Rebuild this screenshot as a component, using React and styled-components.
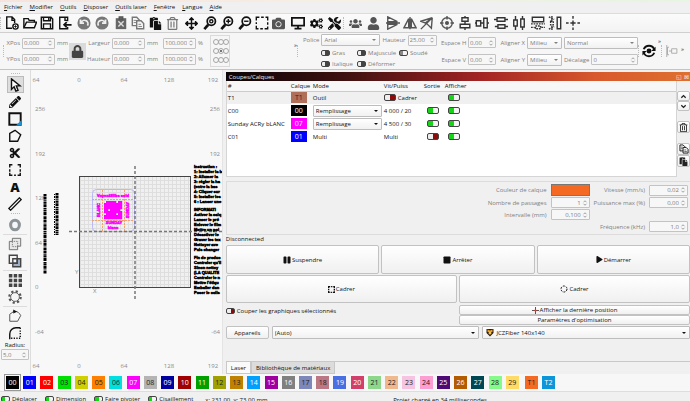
import React from "react";
import styled, { createGlobalStyle, css } from "styled-components";
import {
  FaLock,
  FaCamera,
  FaUser,
  FaUsers,
  FaCut,
  FaPencilAlt,
  FaPause,
  FaStop,
  FaPlay,
  FaCogs,
  FaTools,
  FaArrowsAlt,
  FaRegTrashAlt,
  FaPaste
} from "react-icons/fa";

const GlobalStyle = createGlobalStyle`
  * {
    box-sizing: border-box;
  }
  body {
    margin: 0;
    overflow: hidden;
    background: #f0f0f0;
    color: #111;
    font: 6px/8px "Open Sans", "Noto Sans", sans-serif;
  }
  button, input, select {
    margin: 0;
    font: inherit;
    color: inherit;
  }
  button {
    cursor: pointer;
  }
`;

/* ---------- icons, all on a 16 x 16 grid ---------- */

const Svg = styled.svg`
  display: block;
  flex: none;
  width: ${p => p.$size || 14}px;
  height: ${p => p.$size || 14}px;
  fill: none;
  stroke: currentColor;
  stroke-width: ${p => p.$weight || 1.6};
`;

const icons = {
  newFile: (
    <>
      <path d="M8 14H2V1h6l3 3v4M8 1v4h3" />
      <circle cx="12" cy="12" r="3" />
      <path d="M12 10.500v3M10.500 12h3" strokeWidth="1" />
    </>
  ),
  open: (
    <>
      <path d="M1 13V3h5l1 2h6v2" />
      <path d="M1 13.500L4 7h11.500L13 13.500z" />
    </>
  ),
  save: (
    <>
      <path d="M1.500 1.500h11l2 2v11h-13zM4 1.500v4h8v-4M4 14v-5h8v5" />
      <path d="M10 2v3" />
    </>
  ),
  importFile: (
    <>
      <path d="M11 6V1.500H2v13h9v-2M8 1.500V5h3" />
      <path d="M15.500 10H7M10 7l-3 3 3 3" strokeWidth="2" />
    </>
  ),
  undo: (
    <>
      <circle cx="8" cy="8" r="7.500" fill="#777" stroke="none" />
      <path d="M12 11a4 4 0 0 0-7-4M4 4v4h4" stroke="#eee" strokeWidth="2" />
    </>
  ),
  redo: (
    <>
      <circle cx="8" cy="8" r="7.500" fill="#777" stroke="none" />
      <path d="M4 11a4 4 0 0 1 7-4M12 4v4H8" stroke="#eee" strokeWidth="2" />
    </>
  ),
  cutPaste: (
    <>
      <path d="M2 2.500h12V15H2z" fill="#666" stroke="none" />
      <path d="M6 1h4v3H6z" fill="#666" />
      <path d="M5 6l6 6M11 6l-6 6" stroke="#ddd" />
    </>
  ),
  copy: (
    <>
      <path d="M1.500 1.500h5l3 3V11h-8z" />
      <path d="M6.500 5.500h5l3 3v6h-8z" fill="#f4f4f4" />
      <path d="M3 5h3M3 7.500h3M8.500 9.500h3M8.500 12h4" strokeWidth="1" />
    </>
  ),
  zoom: (
    <>
      <circle cx="9.500" cy="6" r="4.700" strokeWidth="2" />
      <path d="M6 10l-4.500 5" strokeWidth="3" />
      <circle cx="9.500" cy="6" r="1.800" />
    </>
  ),
  zoomIn: (
    <>
      <circle cx="9.500" cy="6" r="4.700" strokeWidth="2" />
      <path d="M6 10l-4.500 5" strokeWidth="3" />
      <path d="M7 6h5M9.500 3.500v5" />
    </>
  ),
  zoomOut: (
    <>
      <circle cx="9.500" cy="6" r="4.700" strokeWidth="2" />
      <path d="M6 10l-4.500 5" strokeWidth="3" />
      <path d="M7 6h5" />
    </>
  ),
  frame: (
    <path d="M1.500 5V1.500H5M7 1.500h3M12 1.500h2.500V5M14.500 7v3M14.500 12v2.500H11M9 14.500H6M4 14.500H1.500V11M1.500 9V7" />
  ),
  monitor: (
    <>
      <path d="M1 2h14v9H1z" strokeWidth="2" />
      <path d="M8 11v3M4 14.500h8" strokeWidth="2" />
    </>
  ),
  flip: <path d="M2 6.500L13 6.500 2 1zM2 9.500h11L2 15zM0 8h16" />,
  mirror: <path d="M6.500 3v10.500H1zM9.500 3v10.500H15zM8 1v14" />,
  mirrorAxis: <path d="M1 6l13-4L6 8zM14 2l-1 12-5-5M1 15L14 2" />,
  target: (
    <>
      <circle cx="8" cy="8" r="6" />
      <circle cx="8" cy="8" r="1.500" fill="currentColor" />
      <path d="M8 0v4M8 12v4M0 8h4M12 8h4" />
    </>
  ),
  alignV: <path d="M4.500 2h7v4h-7zM2.500 9.500h11v4h-11zM8 0v2M8 6v3.500M8 13.500V16" />,
  alignH: <path d="M1.500 5.500h5v6h-5zM10 2.500h4v11h-4zM6.500 8H10M14 8h2M0 8h1" />,
  spreadV: <path d="M3.500 2h9v4h-9zM4.500 10h8v4h-8zM0 4h3M13 4h3M1 12h3M13 12h3" />,
  spreadH: <path d="M2 4.500h4v7H2zM10 3.500h4v9h-4zM4 0v4M4 12v4M12 0v3M12 13v3" />,
  sameWidth: (
    <>
      <path d="M1.500 1.500h13v5h-13z" />
      <path d="M5 11.500h6v3H5zM0 9h16M0 13h4M12 13h4" strokeDasharray="2 1" />
    </>
  ),
  sameHeight: (
    <>
      <path d="M10.500 1.500h4v13h-4z" />
      <path d="M3 6h3v4H3zM4.500 0v5M4.500 11v5M1 1l6 3M1 15l6-3" strokeDasharray="2 1" />
    </>
  ),
  crossCenter: <path d="M8 0v3M8 5v6M8 13v3M0 8h3M5 8h6M13 8h3" />,
  cursor: <path d="M4 1v12l3-3 2 5 2.500-1-2-5H14z" fill="#fff" />,
  rectTool: (
    <>
      <path d="M1.500 1.500h13v13h-13z" strokeWidth="2.200" />
      <path d="M15.500 9v6.500H9z" fill="#1c94d8" stroke="none" />
    </>
  ),
  polygon: <path d="M2 14V5l6-3.500 6.500 5L11 14z" />,
  square: <path d="M5 2H2v3M11 2h3v3M5 14H2v-3M11 14h3v-3M2 7v3M14 7v3M7 14h2" />,
  ruler: <path d="M1 13L13 1l2 2L3 15z" />,
  ring: <ellipse cx="8" cy="8" rx="5" ry="5.500" stroke="#8c9499" strokeWidth="3.500" />,
  weld: (
    <>
      <path d="M5 1.500h9.500v9H11v4H1.500V5H5z" fill="#e8e8e8" />
      <path d="M5 5h6v6H5z" strokeDasharray="1 1" strokeWidth="1" />
    </>
  ),
  subtract: (
    <>
      <path d="M5.500 5.500h9v9h-9z" fill="#9db0c8" />
      <path d="M1.500 1.500h9v9h-9z" fill="#f4f4f4" />
      <path d="M5.500 5.500h5v5h-5z" />
    </>
  ),
  gridArray: (
    <path
      d="M1 1h4v4H1zM6.500 1h4v4h-4zM12 1h4v4h-4zM1 6.500h4v4H1zM6.500 6.500h4v4h-4zM12 6.500h4v4h-4zM1 12h4v4H1zM6.500 12h4v4h-4zM12 12h4v4h-4z"
      fill="currentColor"
      stroke="none"
    />
  ),
  circleArray: (
    <>
      <circle cx="8" cy="8" r="5" />
      <circle cx="8" cy="8" r="6.500" strokeDasharray="2.500 2.600" strokeWidth="2.500" />
    </>
  ),
  nodeEdit: (
    <>
      <path d="M2 14V6l5-3.500c4 0 6 2 7.500 5L11 14z" />
      <path d="M6 .5L10.500 3 6 5z" fill="#111" stroke="none" />
    </>
  ),
  radius: (
    <>
      <path d="M2 15V9a7 7 0 0 1 7-7h5" />
      <path d="M14 2v12H3" strokeDasharray="1.500 1.500" />
    </>
  ),
  sync: (
    <>
      <path d="M2 6a6.500 6.500 0 0 1 12 0M14 10a6.500 6.500 0 0 1-12 0" strokeWidth="2.200" />
      <path d="M15.500 3v5h-5zM.5 13V8h5z" fill="currentColor" stroke="none" />
      <circle cx="8" cy="8" r="2" fill="currentColor" />
    </>
  ),
  dockAlign: <path d="M1 0v16M4 3H2v10h2M7.500 5h7v6h-7zM4 8h3" />,
  up: <path d="M3 11l5-5 5 5" strokeWidth="3" />,
  down: <path d="M3 5l5 5 5-5" strokeWidth="3" />,
  cadreRound: <circle cx="8" cy="8" r="6" strokeDasharray="4 2.300" strokeWidth="2" />,
  position: (
    <>
      <path d="M8 0v16M0 8h16" />
      <circle cx="8" cy="8" r="2.500" fill="#e33" stroke="none" />
    </>
  )
};

const Icon = ({ name, size, weight }) => (
  <Svg viewBox="0 0 16 16" $size={size} $weight={weight} aria-hidden="true">
    {icons[name]}
  </Svg>
);

/* ---------- shared controls ---------- */

const Handle = styled.span`
  flex: none;
  align-self: center;
  ${p =>
    p.$flat
      ? "width: 9px; height: 2px; margin: 1px 0; border-top: 1px dotted #bbb;"
      : "width: 3px; height: 12px; border-left: 1px dotted #bbb;"}
`;

const Spinner = styled.span`
  display: inline-flex;
  align-items: center;
  flex: ${p => (p.$grow ? "1" : "none")};
  width: ${p => p.$width || 33}px;
  height: 11px;
  padding-right: 1px;
  border: 1px solid #c3c3c3;
  border-radius: 1px;
  background: #f7f7f7;
  color: #808080;
  input {
    flex: 1;
    min-width: 0;
    width: 0;
    height: 9px;
    padding: 0 1px;
    border: 0;
    background: transparent;
    text-align: ${p => (p.$right ? "right" : "left")};
  }
`;

const Spin = ({ id, value, label, width, right, grow }) => (
  <Spinner $width={width} $right={right} $grow={grow}>
    <input id={id} defaultValue={value} aria-label={label} />
    <Svg viewBox="0 0 16 16" $size={6} $weight={2} aria-hidden="true">
      <path d="M4 6l4-4 4 4M4 10l4 4 4-4" />
    </Svg>
  </Spinner>
);

const SelectFrame = styled.span`
  display: inline-flex;
  position: relative;
  flex: ${p => (p.$grow ? "1" : "none")};
  width: ${p => (p.$width ? p.$width + "px" : "auto")};
  height: ${p => p.$height || 12}px;
  color: ${p => (p.$muted ? "#808080" : "#111")};
  select {
    appearance: none;
    width: 100%;
    padding: 0 8px 0 ${p => (p.$indent ? 13 : 2)}px;
    border: 1px solid #bdbdbd;
    border-radius: 1px;
    background: linear-gradient(#fff, #f1f1f1);
  }
  &::after {
    content: "";
    position: absolute;
    right: 4px;
    top: calc(50% - 1px);
    border: 2px solid transparent;
    border-top-color: currentColor;
    pointer-events: none;
  }
`;

const Emblem = styled.svg`
  position: absolute;
  left: 4px;
  top: 2px;
  width: 8px;
  height: 9px;
`;

const Select = ({ id, value, label, children, ...frame }) => (
  <SelectFrame {...frame}>
    <select id={id} aria-label={label} defaultValue={value}>
      <option>{value}</option>
    </select>
    {children}
  </SelectFrame>
);

const Switch = styled.input.attrs({ type: "checkbox" })`
  appearance: none;
  display: block;
  flex: none;
  width: ${p => (p.$big ? 12 : 9)}px;
  height: ${p => (p.$big ? 7 : 6)}px;
  border: 1px solid #444;
  border-radius: 2px;
  background: linear-gradient(90deg, #eee 50%, ${p => (p.disabled ? "#444" : "#8d0a0a")} 50%);
  &:checked {
    background: linear-gradient(
      90deg,
      ${p => (p.disabled ? "#888" : "#16d416")} 50%,
      #f4f4f4 50%
    );
  }
`;

const SwitchLabel = styled.label`
  display: flex;
  align-items: center;
  gap: 2px;
  white-space: nowrap;
  color: ${p => (p.$muted ? "#808080" : "#111")};
`;

const Push = styled.button`
  display: flex;
  align-items: center;
  justify-content: center;
  gap: 1px;
  flex: ${p => (p.$fixed ? "none" : "1 1 0")};
  width: ${p => (p.$fixed ? p.$fixed + "px" : "auto")};
  height: ${p => p.$height}px;
  padding: 0;
  border: 1px solid #c2c2c2;
  border-radius: 2px;
  background: linear-gradient(#fff, #f0f0f0);
`;

/* ---------- top bars ---------- */

const Window = styled.div`
  display: flex;
  flex-direction: column;
  height: 100vh;
  border-top: 2px solid;
  border-image: linear-gradient(90deg, #f7e3de, #f6efe4 50%, #e6f5e2) 1;
`;

const MenuBar = styled.nav`
  display: flex;
  gap: 7px;
  height: 11px;
  padding: 1px 4px;
`;

const MenuLink = styled.a`
  display: inline-block;
  color: inherit;
  text-decoration: none;
  &::first-letter {
    text-decoration: underline;
  }
`;

const ToolBar = styled.div`
  display: flex;
  align-items: center;
  height: 20px;
  border-top: 1px solid #dcdcdc;
  border-bottom: 1px solid #cfcfcf;
  background: linear-gradient(#fbfbfb, #f3f3f3);
`;

const ToolButton = styled.button`
  display: flex;
  align-items: center;
  justify-content: center;
  flex: none;
  width: 17px;
  height: 17px;
  margin-left: ${p => p.$space || 0}px;
  padding: 0;
  border: 0;
  background: none;
  color: ${p => p.$color || "#111"};
  font-size: 13px;
  ${p =>
    p.$active &&
    css`
      border: 1px solid #bbb;
      background: #dedede;
    `}
`;

const OptionBar = styled.div`
  display: flex;
  align-items: center;
  height: 37px;
  padding-left: 3px;
  border-bottom: 1px solid #c4c4c4;
  background: #f6f6f6;
  color: #808080;
  white-space: nowrap;
`;

const Fields = styled.div`
  display: grid;
  grid-template-columns: ${p => p.$cols};
  align-items: center;
  gap: 5px 2px;
  flex: none;
  margin-left: ${p => p.$left || 0}px;
  label {
    text-align: right;
  }
`;

const FontFields = styled.div`
  display: flex;
  flex-direction: column;
  gap: 3px;
  flex: none;
  width: 132px;
  margin-left: 3px;
`;

const FieldLine = styled.div`
  display: flex;
  align-items: center;
  gap: 2px;
`;

const StyleChecks = styled.div`
  display: grid;
  grid-template-columns: 34px 40px 30px;
  gap: 3px 2px;
  padding-left: 18px;
`;

const LockButton = styled.button`
  display: flex;
  align-items: center;
  justify-content: center;
  flex: none;
  width: 17px;
  height: 17px;
  margin: 0 1px;
  padding: 0;
  border: 0;
  background: #dadada;
  color: #444;
  font-size: 13px;
`;

const Anchors = styled.fieldset`
  display: grid;
  grid-template-columns: repeat(3, 5px);
  justify-content: center;
  align-content: space-evenly;
  flex: none;
  width: 20px;
  height: 32px;
  margin: 0 0 0 6px;
  padding: 0;
  border: 1px solid #dadada;
  input {
    appearance: none;
    width: 6px;
    height: 6px;
    margin: 0;
    border: 1px solid #a5a5a5;
    border-radius: 50%;
  }
  input:checked {
    background: radial-gradient(#777 40%, transparent 50%);
  }
`;

const More = styled.span`
  align-self: flex-start;
  flex: none;
  margin-left: ${p => p.$left || 0}px;
  padding-top: ${p => p.$top || 4}px;
  color: #222;
`;

const dark = "#111";
const grey = "#555";

// [icon, colour, extra space before it], null for a handle
const toolbar = [
  ["newFile", dark], ["open", dark, 1], ["save", dark], ["importFile", dark, 1],
  ["undo", grey, 2], ["redo", grey, 1], ["cutPaste", grey, 2], ["copy", "#777"],
  [<FaPaste />, dark, 1], [<FaRegTrashAlt />, "#777"],
  [<FaArrowsAlt />, dark, 2], ["zoom", dark, 1], ["zoomIn", dark], ["zoomOut", dark, 1],
  ["frame", dark], [<FaCamera />, grey], ["monitor", dark, 2], [<FaCogs />, dark, 2],
  [<FaTools />, dark, 1], null, [<FaUsers />, grey, 1], [<FaUser />, grey, 1],
  ["flip", grey, 2], ["mirror", grey], ["mirrorAxis", grey], ["target", grey, 3],
  ["alignV", "#333", 1], ["alignH", "#333"], ["spreadV", "#333", 2], ["spreadH", "#333", 1],
  ["sameWidth", "#333", 2], ["sameHeight", "#333"], ["crossCenter", "#333", 1]
];

const TopTools = () => (
  <ToolBar>
    <Handle />
    {toolbar.map((tool, i) =>
      tool ? (
        <ToolButton key={i} $color={tool[1]} $space={tool[2]}>
          {typeof tool[0] === "string" ? <Icon name={tool[0]} size={14} /> : tool[0]}
        </ToolButton>
      ) : (
        <Handle key={i} />
      )
    )}
  </ToolBar>
);

const Options = () => (
  <OptionBar>
    <Handle />
    <Fields $cols="14px 33px 11px">
      <label htmlFor="xpos">XPos</label>
      <Spin id="xpos" value="0,000" />
      <span>mm</span>
      <label htmlFor="ypos">YPos</label>
      <Spin id="ypos" value="0,000" />
      <span>mm</span>
    </Fields>
    <LockButton aria-label="Verrouiller">
      <FaLock />
    </LockButton>
    <Fields $cols="23px 33px 14px 33px 6px">
      <label htmlFor="width">Largeur</label>
      <Spin id="width" value="0,000" />
      <span>mm</span>
      <Spin label="Largeur %" value="100,000" />
      <span>%</span>
      <label htmlFor="height">Hauteur</label>
      <Spin id="height" value="0,000" />
      <span>mm</span>
      <Spin label="Hauteur %" value="100,000" />
      <span>%</span>
    </Fields>
    <Anchors>
      {[0, 1, 2, 3, 4, 5, 6, 7, 8].map(n => (
        <input key={n} type="radio" name="anchor" defaultChecked={n === 4} aria-label={"Ancre " + (n + 1)} />
      ))}
    </Anchors>
    <More $left={64} $top={8}>»</More>
    <Handle />
    <FontFields>
      <FieldLine>
        <label htmlFor="font">Police</label>
        <Select id="font" value="Arial" $width={59} $muted />
        <label htmlFor="fontsize">Hauteur</label>
        <Spin id="fontsize" value="25,00" width={29} />
      </FieldLine>
      <StyleChecks>
        <SwitchLabel $muted><Switch disabled />Gras</SwitchLabel>
        <SwitchLabel $muted><Switch disabled />Majuscule</SwitchLabel>
        <SwitchLabel $muted><Switch disabled defaultChecked />Soudé</SwitchLabel>
        <SwitchLabel $muted><Switch disabled />Italique</SwitchLabel>
        <SwitchLabel $muted><Switch disabled />Déformer</SwitchLabel>
      </StyleChecks>
    </FontFields>
    <Fields $cols="25px 28px 27px 35px 74px" $left={6}>
      <label htmlFor="spaceh">Espace H</label>
      <Spin id="spaceh" value="0,00" width={28} />
      <label htmlFor="alignx">Aligner X</label>
      <Select id="alignx" value="Milieu" $width={35} $muted />
      <Select label="Style" value="Normal" $width={74} $muted />
      <label htmlFor="spacev">Espace V</label>
      <Spin id="spacev" value="0,00" width={28} />
      <label htmlFor="aligny">Aligner Y</label>
      <Select id="aligny" value="Milieu" $width={35} $muted />
      <FieldLine>
        <label htmlFor="offset">Décalage</label>
        <Spin id="offset" value="0" grow />
      </FieldLine>
    </Fields>
    <Handle />
    <ToolButton aria-label="Actualiser">
      <Icon name="sync" size={14} />
    </ToolButton>
    <More>»</More>
    <Handle />
    <ToolButton $color="#999" aria-label="Aligner">
      <Icon name="dockAlign" size={12} weight={1} />
    </ToolButton>
    <More $top={12}>»</More>
  </OptionBar>
);

/* ---------- left tools and work area ---------- */

const Main = styled.main`
  display: flex;
  flex: 1;
  min-height: 0;
`;

const SideTools = styled.aside`
  display: flex;
  flex-direction: column;
  align-items: center;
  flex: none;
  width: 31px;
  padding-top: 2px;
  border-right: 1px solid #ddd;
  background: #f6f6f6;
`;

const SideRule = styled.hr`
  width: 24px;
  height: 1px;
  margin: 1px 0 0;
  border: 0;
  background: #dcdcdc;
`;

const Letter = styled.b`
  font: 800 13px/14px "Open Sans", sans-serif;
`;

const SideList = () => (
  <SideTools>
    <Handle $flat />
    <ToolButton $active><Icon name="cursor" /></ToolButton>
    <ToolButton><FaPencilAlt size={12} /></ToolButton>
    <ToolButton><Icon name="rectTool" /></ToolButton>
    <ToolButton><Icon name="polygon" /></ToolButton>
    <ToolButton><FaCut size={12} /></ToolButton>
    <ToolButton><Icon name="square" /></ToolButton>
    <ToolButton><Letter>A</Letter></ToolButton>
    <ToolButton><Icon name="ruler" /></ToolButton>
    <Handle $flat />
    <ToolButton><Icon name="ring" /></ToolButton>
    <SideRule />
    <ToolButton $color="#666"><Icon name="weld" weight={1} /></ToolButton>
    <ToolButton $color="#444"><Icon name="subtract" /></ToolButton>
    <SideRule />
    <ToolButton $color="#444"><Icon name="gridArray" /></ToolButton>
    <ToolButton $color="#555"><Icon name="circleArray" weight={1} /></ToolButton>
    <SideRule />
    <ToolButton $color="#444"><Icon name="nodeEdit" weight={1} /></ToolButton>
    <ToolButton><Icon name="radius" /></ToolButton>
    <label htmlFor="radius">Radius:</label>
    <Spin id="radius" value="5,0" width={28} />
  </SideTools>
);

const Drawing = styled.svg`
  flex: 192 1 0;
  min-width: 0;
  height: 100%;
  background: #f8f8f8;
  text {
    font-family: "Open Sans", sans-serif;
    font-size: 6px;
    fill: #8a8a8a;
  }
  .notes text {
    font: bold 4px "Liberation Sans", sans-serif;
    fill: #000;
    stroke: #000;
    stroke-width: 0.5px;
  }
  .label text {
    font: bold 4px "Liberation Sans", sans-serif;
    fill: #f0f;
    stroke: #f0f;
    stroke-width: 0.5px;
    text-anchor: middle;
  }
`;

const notes = [
  "Instruction :", "1: Installer la b", "2: Allumer la", "3: régler la ha", "(entre la bas",
  "4: Cliquer sur", "5: Installer les", "6 : Lancer une", "",
  "INFORMATI", "Activer la calq", "Lancer le pré", "Enlever le film", "Mettre un poi",
  "Désactiver le", "Graver les tex", "Nettoyer ave", "Puis changer", "",
  "Fin de produc", "Controler qu'il", "Sinon nettoy", "(LA QUALITE", "Controler le n",
  "Mettre l'étiqu", "Emballer dan", "Poser le colis"
];

// blank lines are 2px shorter than the written ones
const noteY = i => 168 + i * 5 - notes.slice(0, i).filter(n => !n).length * 2;

const codeCells = [];
for (let r = 0; r < 9; r++) {
  for (let c = 0; c < 9; c++) {
    if ((r * 5 + c * 7 + r * c) % 6 !== 0) codeCells.push([104 + c * 2, 201 + r * 2]);
  }
}

const WorkArea = () => (
  <Drawing viewBox="31 70 192 304" preserveAspectRatio="xMinYMin slice">
    <defs>
      <pattern id="grid" width="4" height="4" patternUnits="userSpaceOnUse">
        <path d="M0 .5h4M.5 0v4" stroke="#dedede" />
      </pattern>
    </defs>
    {[36, 79, 124, 169, 213].map((x, i) => (
      <React.Fragment key={x}>
        <text x={x} y="82" textAnchor="middle">{[64, 0, 64, 128, 192][i]}</text>
        <text x={x} y="368" textAnchor="middle">{[64, 0, 64, 128, 192][i]}</text>
      </React.Fragment>
    ))}
    {[256, 192, 128, 64, 0, -64].map((v, i) => (
      <text key={v} x="35" y={111 + i * 44.6}>{v}</text>
    ))}
    {[[256, 111], [192, 156], [-64, 334]].map(([v, y]) => (
      <text key={v} x="220" y={y} textAnchor="end">{v}</text>
    ))}
    <rect x="79.500" y="176.500" width="111" height="111" fill="#f0f0f0" />
    <rect x="79.500" y="176.500" width="111" height="111" fill="url(#grid)" stroke="#444" />
    <text x="75" y="274">Y</text>
    <text x="93" y="293">X</text>
    <g className="label">
      <rect x="92.500" y="189.500" width="42" height="42" rx="4" fill="none" stroke="#b9b9f5" />
      <path
        d="M92 199.500h42M92 220.500h42M102.500 190v41M124.500 190v41"
        fill="none"
        stroke="#f2a36d"
        strokeDasharray="2 1"
      />
      {codeCells.map(([x, y]) => (
        <rect key={x + "-" + y} x={x} y={y} width="2.200" height="2.200" fill="#f0f" />
      ))}
      <text x="113" y="197">Voyez48ilbs sold</text>
      <text x="114" y="224">SUNDAY</text>
      <text x="113" y="229">blanc</text>
      <text transform="translate(100 210) rotate(-90)">BLANC</text>
      <text transform="translate(129 210) rotate(-90)">SUNDAY</text>
    </g>
    <path
      d="M69 231.500h154M135 166v134"
      stroke="#777"
      strokeWidth="1.500"
      strokeDasharray="3 2"
    />
    <path d="M45 194v80M57 193v42" stroke="#000" strokeWidth="3" strokeDasharray="2 .5 3 .8 1 .4" />
    <path d="M54.500 194v41" stroke="#000" strokeDasharray="1 1 2 1" />
    <g className="notes">
      {notes.map((line, i) => (
        <text key={i} x="194" y={noteY(i)}>{line}</text>
      ))}
    </g>
  </Drawing>
);

/* ---------- cuts / layers dock ---------- */

const Dock = styled.section`
  display: flex;
  flex-direction: column;
  flex: 467 1 0;
  min-width: 0;
  padding: 2px 0 0 3px;
  border-left: 1px solid #e4e4e4;
`;

const DockTitle = styled.header`
  display: flex;
  align-items: center;
  justify-content: space-between;
  height: 9px;
  padding: 0 1px 0 3px;
  background: linear-gradient(90deg, #0c0505, #3c1010 25%, #a32424 55%, #d85a2c 80%, #de7030);
  color: #eee;
`;

const LayerArea = styled.div`
  display: flex;
`;

const TableBox = styled.div`
  flex: 1;
  height: 96px;
  border: 1px solid #d5d5d5;
  border-top: 0;
  background: #fff;
`;

const LayerTable = styled.table`
  width: 100%;
  table-layout: fixed;
  border-collapse: collapse;
  th, td {
    padding: 0 1px;
    font-weight: normal;
    text-align: left;
    white-space: nowrap;
  }
  td:nth-child(n + 5) {
    padding-left: 4px;
  }
  thead tr {
    height: 10px;
    border-bottom: 1px solid #ccc;
    background: #f7f7f7;
  }
  tbody tr {
    height: 13px;
  }
  tbody tr:first-child {
    background: #f0f0f0;
  }
`;

const Chip = styled.span`
  display: flex;
  align-items: center;
  justify-content: center;
  width: 16px;
  height: 11px;
  background: ${p => p.$bg};
  color: ${p => p.$ink || "#fff"};
  font-size: 7px;
`;

const layers = [
  { name: "T1", tag: "T1", bg: "#b06f58", ink: "#402018", mode: "Outil", on: true },
  { name: "C00", tag: "00", bg: "#000", mode: "Remplissage", fill: true, speed: "4 000 / 20", out: true, on: true },
  { name: "Sunday ACRy bLANC", tag: "07", bg: "#f0f", mode: "Remplissage", fill: true, speed: "4 500 / 30", out: true, on: true },
  { name: "C01", tag: "01", bg: "#00f", mode: "Multi", speed: "Multi", out: false, on: true }
];

const SideButtons = styled.div`
  display: flex;
  flex-direction: column;
  flex: none;
  width: 13px;
  padding-top: 10px;
  color: #222;
`;

const Gap = styled.span`
  height: 10px;
`;

const CutSettings = styled.div`
  display: grid;
  grid-template-columns: 1fr auto 39px auto 39px;
  align-items: center;
  gap: 1px 4px;
  margin-top: 4px;
  padding: 2px 2px;
  border: 1px solid #dcdcdc;
  border-right: 0;
  color: #808080;
  label {
    grid-column: 2;
    text-align: right;
  }
  label.right {
    grid-column: 4;
  }
`;

const Swatch = styled.input`
  appearance: none;
  width: 39px;
  height: 12px;
  padding: 0;
  border: 1px solid #777;
  background: #f56a22;
  &::-webkit-color-swatch-wrapper {
    padding: 0;
  }
  &::-webkit-color-swatch {
    border: 0;
  }
`;

const State = styled.p`
  margin: 0;
  padding: 0 0 2px;
`;

const ButtonRow = styled.div`
  display: flex;
  gap: 2px;
  margin-bottom: 1px;
`;

const Half = styled.div`
  display: flex;
  flex-direction: column;
  align-items: ${p => (p.$top ? "flex-start" : "stretch")};
  flex: 1 1 0;
  padding-top: ${p => (p.$top ? 3 : 1)}px;
`;

const Devices = styled.div`
  display: flex;
  gap: 3px;
`;

const Tabs = styled.div`
  display: flex;
  margin-top: auto;
  border-top: 1px solid #c8c8c8;
`;

const Tab = styled.button`
  height: 12px;
  padding: 0 4px;
  border: 1px solid #c8c8c8;
  border-top: 0;
  background: ${p => (p.$active ? "#fafafa" : "#dcdcdc")};
`;

const LayersDock = () => (
  <Dock>
    <DockTitle>
      <span>Coupes/Calques</span>
      <span>◱ ⊠</span>
    </DockTitle>
    <LayerArea>
      <TableBox>
        <LayerTable>
          <colgroup>
            <col width="63" />
            <col width="22" />
            <col width="71" />
            <col width="40" />
            <col width="21" />
            <col />
          </colgroup>
          <thead>
            <tr>
              <th>#</th>
              <th>Calque</th>
              <th>Mode</th>
              <th>Vit/Puiss</th>
              <th>Sortie</th>
              <th>Afficher</th>
            </tr>
          </thead>
          <tbody>
            {layers.map(layer => (
              <tr key={layer.name}>
                <td>{layer.name}</td>
                <td>
                  <Chip $bg={layer.bg} $ink={layer.ink}>{layer.tag}</Chip>
                </td>
                <td>
                  {layer.fill ? (
                    <Select label={"Mode " + layer.name} value={layer.mode} $width={69} />
                  ) : (
                    layer.mode
                  )}
                </td>
                <td>
                  {layer.speed || (
                    <SwitchLabel>
                      <Switch $big />
                      Cadrer
                    </SwitchLabel>
                  )}
                </td>
                <td>
                  {layer.speed && (
                    <Switch $big defaultChecked={layer.out} aria-label={"Sortie " + layer.name} />
                  )}
                </td>
                <td>
                  <Switch $big defaultChecked={layer.on} aria-label={"Afficher " + layer.name} />
                </td>
              </tr>
            ))}
          </tbody>
        </LayerTable>
      </TableBox>
      <SideButtons>
        <Push $fixed={13} $height={10} aria-label="Monter"><Icon name="up" size={7} /></Push>
        <Push $fixed={13} $height={10} aria-label="Descendre"><Icon name="down" size={7} /></Push>
        <Gap />
        <Push $fixed={13} $height={12} aria-label="Supprimer"><FaRegTrashAlt size={9} /></Push>
        <Gap />
        <Push $fixed={13} $height={12} aria-label="Copier"><Icon name="copy" size={10} /></Push>
        <Push $fixed={13} $height={12} aria-label="Coller"><FaPaste size={9} /></Push>
      </SideButtons>
    </LayerArea>
    <CutSettings>
      <label htmlFor="color">Couleur de calque</label>
      <Swatch id="color" type="color" defaultValue="#f56a22" />
      <label className="right" htmlFor="speed">Vitesse (mm/s)</label>
      <Spin id="speed" value="0,02" width={39} right />
      <label htmlFor="passes">Nombre de passages</label>
      <Spin id="passes" value="1" width={39} right />
      <label className="right" htmlFor="power">Puissance max (%)</label>
      <Spin id="power" value="0,00" width={39} right />
      <label htmlFor="interval">Intervalle (mm)</label>
      <Spin id="interval" value="0,100" width={39} right />
      <span />
      <span />
      <label className="right" htmlFor="freq">Fréquence (kHz)</label>
      <Spin id="freq" value="1,0" width={39} right />
    </CutSettings>
    <State>Disconnected</State>
    <ButtonRow>
      <Push $height={29}><FaPause size={8} />Suspendre</Push>
      <Push $height={29}><FaStop size={8} />Arrêter</Push>
      <Push $height={29}><FaPlay size={7} />Démarrer</Push>
    </ButtonRow>
    <ButtonRow>
      <Push $height={28}><Icon name="frame" size={7} weight={3} />Cadrer</Push>
      <Push $height={28}><Icon name="cadreRound" size={8} />Cadrer</Push>
    </ButtonRow>
    <ButtonRow>
      <Half $top>
        <SwitchLabel><Switch />Couper les graphiques sélectionnés</SwitchLabel>
      </Half>
      <Half>
        <Push $height={12}><Icon name="position" size={7} />Afficher la dernière position</Push>
        <Push $height={12}>Paramètres d'optimisation</Push>
      </Half>
    </ButtonRow>
    <Devices>
      <Push $fixed={43} $height={13}>Appareils</Push>
      <Select label="Port" value="(Auto)" $grow $height={13} />
      <Select label="Appareil" value="JCZFiber 140x140" $grow $height={13} $indent>
        <Emblem viewBox="0 0 16 16" aria-hidden="true">
          <path d="M1 1h14v8l-7 7-7-7z" fill="#2b1a10" />
          <path d="M3 2l5 2 5-2v5H3z" fill="#f0a020" />
          <circle cx="8" cy="9" r="3" fill="#f6c040" />
        </Emblem>
      </Select>
    </Devices>
    <Tabs>
      <Tab $active>Laser</Tab>
      <Tab>Bibliothèque de matériaux</Tab>
    </Tabs>
  </Dock>
);

/* ---------- bottom bars ---------- */

const Palette = styled.div`
  display: flex;
  align-items: center;
  height: 18px;
  padding-left: 6px;
  border-bottom: 1px solid #ddd;
  background: #f7f7f7;
`;

const PaletteGroup = styled.div`
  display: flex;
  justify-content: space-between;
  flex: none;
  width: ${p => p.$width};
  margin-right: 6px;
`;

const Color = styled.button`
  width: 13px;
  height: 13px;
  padding: 0;
  border: 0;
  background: ${p => p.$bg};
  color: ${p => p.$ink};
  font-size: 7px;
  text-align: center;
  outline: ${p => (p.$active ? "1px solid #999" : "none")};
  outline-offset: 1px;
`;

const w = "#fff";
const k = "#222";
const palette = [
  ["#000", w], ["#00f", w], ["#f00", w], ["#00e000", k], ["#d0d000", k], ["#ff8000", k],
  ["#00e0e0", k], ["#f0f", w], ["#b4b4b4", k], ["#0000a0", w], ["#a00000", w], ["#00a000", w],
  ["#a0a000", k], ["#c08000", k], ["#00a0ff", w], ["#a000a0", w], ["#808080", w], ["#7d87b9", k],
  ["#bb7784", k], ["#4a6fe3", w], ["#d33f6a", w], ["#8cd78c", k], ["#f0b98d", k], ["#f6c4e1", k],
  ["#fa9ed4", k], ["#500a78", w], ["#b45a00", w], ["#004754", w], ["#86fa88", k], ["#ffdb66", k]
];

const StatusBar = styled.footer`
  display: flex;
  gap: 8px;
  height: 9px;
  padding: 4px 1px 0;
  overflow: hidden;
  white-space: nowrap;
`;

const Coords = styled.span`
  flex: 1;
  padding-left: 4px;
`;

const Message = styled.span`
  flex: none;
  width: 43%;
`;

const menus = ["Fichier", "Modifier", "Outils", "Disposer", "Outils laser", "Fenêtre", "Langue", "Aide"];

const App = () => (
  <>
    <GlobalStyle />
    <Window>
      <MenuBar>
        {menus.map(menu => (
          <MenuLink key={menu} href="#">{menu}</MenuLink>
        ))}
      </MenuBar>
      <TopTools />
      <Options />
      <Main>
        <SideList />
        <WorkArea />
        <LayersDock />
      </Main>
      <Palette>
        <PaletteGroup $width="75%">
          {palette.map(([bg, ink], i) => (
            <Color key={i} $bg={bg} $ink={ink} $active={i === 0}>
              {String(i).padStart(2, "0")}
            </Color>
          ))}
        </PaletteGroup>
        <PaletteGroup $width="30px">
          <Color $bg="#f56a22" $ink={k}>T1</Color>
          <Color $bg="#0c96d9" $ink={w}>T2</Color>
        </PaletteGroup>
      </Palette>
      <StatusBar>
        <SwitchLabel><Switch defaultChecked />Déplacer</SwitchLabel>
        <SwitchLabel><Switch defaultChecked />Dimension</SwitchLabel>
        <SwitchLabel><Switch defaultChecked />Faire pivoter</SwitchLabel>
        <SwitchLabel><Switch defaultChecked />Cisaillement</SwitchLabel>
        <Coords>x: 231,00, y: 73,00 mm</Coords>
        <Message>Projet chargé en 34 millisecondes</Message>
      </StatusBar>
    </Window>
  </>
);

export default App;
